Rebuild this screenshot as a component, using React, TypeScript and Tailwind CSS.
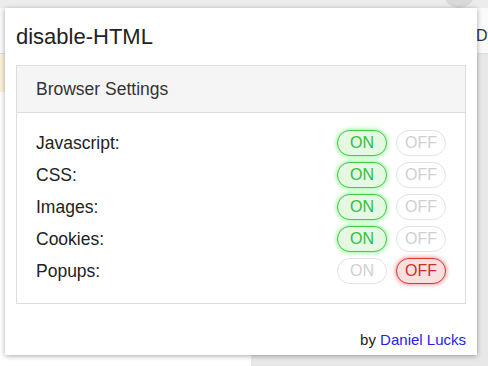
import React from "react";

const rows: { label: string; on: boolean }[] = [
  { label: "Javascript:", on: true },
  { label: "CSS:", on: true },
  { label: "Images:", on: true },
  { label: "Cookies:", on: true },
  { label: "Popups:", on: false },
];

function Toggle({ on }: { on: boolean }) {
  return (
    <div className="flex gap-[9px]">
      {on ? (
        <div className="w-[50px] h-[26px] rounded-full border border-[#3fcf3f] bg-[#e4f8e4] text-[#38bd38] shadow-[0_0_5px_#6fef6f] flex items-center justify-center text-[16px]">
          ON
        </div>
      ) : (
        <div className="w-[50px] h-[26px] rounded-full border border-[#e3e3e3] bg-white text-[#d0d0d0] flex items-center justify-center text-[16px]">
          ON
        </div>
      )}
      {on ? (
        <div className="w-[50px] h-[26px] rounded-full border border-[#e3e3e3] bg-white text-[#d0d0d0] flex items-center justify-center text-[16px]">
          OFF
        </div>
      ) : (
        <div className="w-[50px] h-[26px] rounded-full border border-[#d83a3a] bg-[#f9e0e0] text-[#c9302c] shadow-[0_0_5px_#f07070] flex items-center justify-center text-[16px]">
          OFF
        </div>
      )}
    </div>
  );
}

export default function App() {
  return (
    <div
      className="relative w-[488px] h-[366px] overflow-hidden bg-white"
      style={{ fontFamily: '"Liberation Sans", Arial, sans-serif' }}
    >
      {/* browser background */}
      <div className="flex flex-col h-full">
        <div className="relative h-[8px] bg-[#ececec]">
          <div className="absolute left-[443px] top-[-24px] w-[32px] h-[32px] rounded-full bg-[#d9d9d9]" />
        </div>
        <div className="relative h-[46px] bg-[#fafafa] border-b border-[#dcdcdc]">
          <span className="absolute left-[476px] top-[16px] text-[16px] text-[#333]">Dt</span>
        </div>
        <div className="flex flex-1">
          <div className="w-[251px] flex flex-col">
            <div className="h-[38px] bg-[#fcf1d8]" />
            <div className="flex-1 bg-white" />
          </div>
          <div className="flex-1 bg-[#e8e8e8]" />
        </div>
      </div>

      {/* popup */}
      <div className="absolute left-[5px] top-[8px] w-[472px] h-[347px] bg-white shadow-[0_1px_5px_rgba(0,0,0,0.35)] px-[11px] pt-[17px] flex flex-col text-[#333]">
        <div className="text-[22px] leading-[24px] text-[#222]">disable-HTML</div>
        <div className="mt-[16px] border border-[#dddddd]">
          <div className="h-[47px] bg-[#f5f5f5] border-b border-[#dddddd] px-[19px] flex items-center text-[17.5px]">
            Browser Settings
          </div>
          <div className="px-[19px] pt-[17px] pb-[19px] flex flex-col gap-[6px]">
            {rows.map((r) => (
              <div key={r.label} className="h-[26px] flex items-center justify-between">
                <span className="text-[17.5px] text-[#222]">{r.label}</span>
                <Toggle on={r.on} />
              </div>
            ))}
          </div>
        </div>
        <div className="mt-auto mb-[5px] text-right text-[15px] leading-[21px] text-[#222]">
          by <span className="text-[#2222ee]">Daniel Lucks</span>
        </div>
      </div>
    </div>
  );
}
